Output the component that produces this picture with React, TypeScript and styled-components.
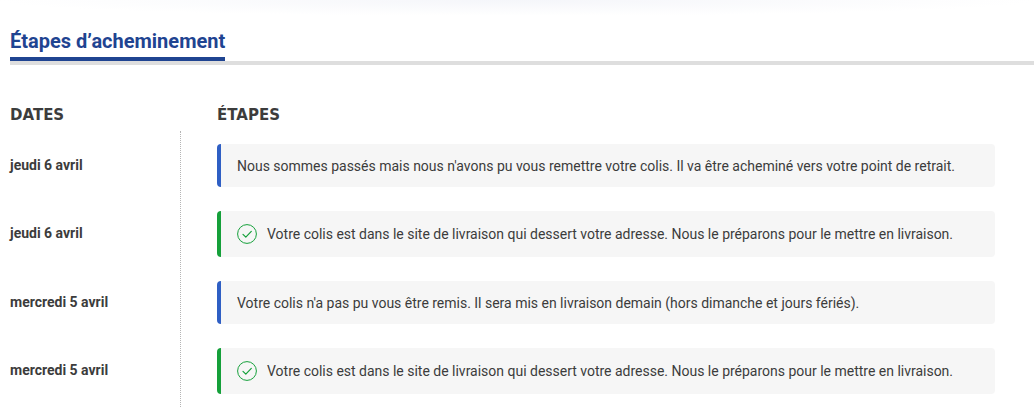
import styled, { createGlobalStyle } from "styled-components";

const GlobalStyle = createGlobalStyle`
  html, body {
    margin: 0;
    padding: 0;
    background: #fff;
    overflow: hidden;
  }
  * { box-sizing: border-box; }
`;

const Page = styled.div`
  width: 1034px;
  height: 407px;
  overflow: hidden;
  font-family: Roboto, "Liberation Sans", sans-serif;
  background: radial-gradient(ellipse 520px 16px at 50% 0, #f5f6fa, #fff);
  padding-top: 28px;
`;

const TitleBar = styled.div`
  margin-left: 10px;
  border-bottom: 4px solid #dedede;
  height: 37px;
`;

const Title = styled.h2`
  display: inline-block;
  margin: 0;
  height: 33px;
  font-size: 20px;
  line-height: 27px;
  font-weight: 700;
  color: #1f4491;
  border-bottom: 4px solid #1f4491;
  vertical-align: top;
`;

const Heads = styled.div`
  display: grid;
  grid-template-columns: 207px 1fr;
  padding: 40px 0 0 10px;
  height: 66px;
`;

const Head = styled.div`
  font-family: "DejaVu Sans", Inter, sans-serif;
  font-size: 15px;
  line-height: 20px;
  font-weight: 700;
  color: #3c3c3c;
`;

const Timeline = styled.div`
  display: grid;
  grid-template-columns: 181px 1fr;
`;

const DateCol = styled.div`
  border-right: 1px dotted #b5b5b5;
  height: 276px;
  padding-top: 13px;
`;

const DateLabel = styled.div<{ $h: number }>`
  height: ${(p) => p.$h}px;
  margin-bottom: 24px;
  padding-left: 10px;
  font-size: 14px;
  font-weight: 700;
  color: #3c3c3c;
  line-height: ${(p) => p.$h - 1}px;
`;

const Rows = styled.div`
  display: flex;
  flex-direction: column;
  gap: 24px;
  padding: 13px 0 0 36px;
  width: 814px;
`;

const Step = styled.div<{ $accent: string; $h: number }>`
  display: flex;
  align-items: center;
  gap: 10px;
  height: ${(p) => p.$h}px;
  padding-left: 16px;
  background: #f6f6f6;
  border-left: 4px solid ${(p) => p.$accent};
  border-radius: 4px;
  font-size: 14px;
  letter-spacing: -0.008px;
  color: #3c3c3c;
`;

const steps = [
  {
    date: "jeudi 6 avril",
    kind: "info",
    text: "Nous sommes passés mais nous n'avons pu vous remettre votre colis. Il va être acheminé vers votre point de retrait.",
  },
  {
    date: "jeudi 6 avril",
    kind: "done",
    text: "Votre colis est dans le site de livraison qui dessert votre adresse. Nous le préparons pour le mettre en livraison.",
  },
  {
    date: "mercredi 5 avril",
    kind: "info",
    text: "Votre colis n'a pas pu vous être remis. Il sera mis en livraison demain (hors dimanche et jours fériés).",
  },
  {
    date: "mercredi 5 avril",
    kind: "done",
    text: "Votre colis est dans le site de livraison qui dessert votre adresse. Nous le préparons pour le mettre en livraison.",
  },
];

const CheckIcon = () => (
  <svg width="20" height="20" viewBox="0 0 20 20" fill="none" stroke="#15a03a" strokeWidth="1">
    <circle cx="10" cy="10" r="9.4" />
    <path d="M6 10.3l2.8 2.8L14.3 7.4" strokeWidth="1.2" strokeLinecap="round" strokeLinejoin="round" />
  </svg>
);

const App = () => {
  return (
    <Page>
      <GlobalStyle />
      <TitleBar>
        <Title>Étapes d’acheminement</Title>
      </TitleBar>
      <Heads>
        <Head>DATES</Head>
        <Head>ÉTAPES</Head>
      </Heads>
      <Timeline>
        <DateCol>
          {steps.map((s, i) => (
            <DateLabel key={i} $h={s.kind === "done" ? 46 : 43}>
              {s.date}
            </DateLabel>
          ))}
        </DateCol>
        <Rows>
          {steps.map((s, i) => (
            <Step
              key={i}
              $h={s.kind === "done" ? 46 : 43}
              $accent={s.kind === "done" ? "#15a03a" : "#2f5fc4"}
            >
              {s.kind === "done" && <CheckIcon />}
              {s.text}
            </Step>
          ))}
        </Rows>
      </Timeline>
    </Page>
  );
};

export default App;
